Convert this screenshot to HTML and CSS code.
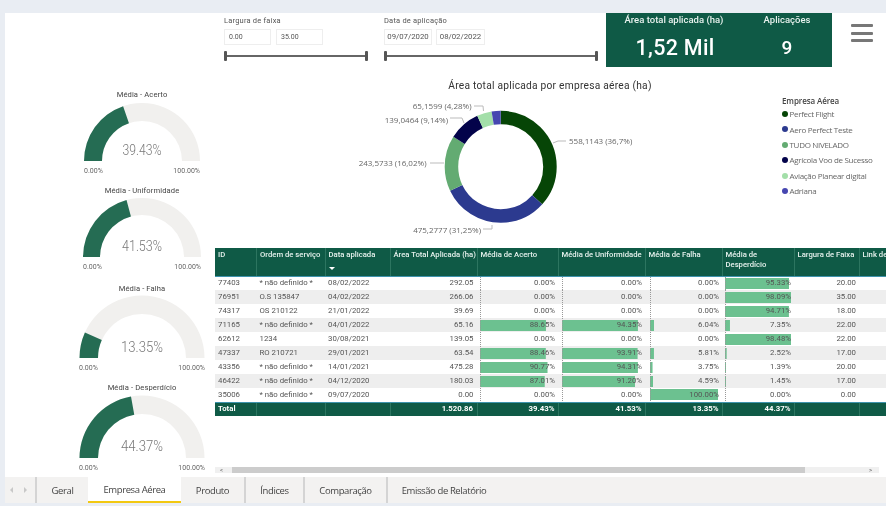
FILE: index.html
```html
<!DOCTYPE html>
<html lang="pt">
<head>
<meta charset="utf-8">
<title>Empresa Aérea</title>
<link rel="stylesheet" href="styles.css">
</head>
<body>
<div class="page">
  <div class="canvas">
    <aside class="gauges">
      <section class="gauge g1">
        <h3>Média - Acerto</h3>
        <svg width="130" height="60" viewBox="0 0 130 60">
          <path class="track" d="M7 60A58 58 0 0 1 123 60L105 60A40 40 0 0 0 25 60Z"/>
          <path class="fill" d="M7 60A58 58 0 0 1 46.1 5.2L51.96 22.2A40 40 0 0 0 25 60Z"/>
          <text x="65" y="54" textLength="39" lengthAdjust="spacingAndGlyphs">39.43%</text>
        </svg>
        <div class="range"><span>0.00%</span><span>100.00%</span></div>
      </section>
      <section class="gauge g2">
        <h3>Média - Uniformidade</h3>
        <svg width="130" height="60" viewBox="0 0 130 60">
          <path class="track" d="M6 60A59 59 0 0 1 124 60L107 60A42 42 0 0 0 23 60Z"/>
          <path class="fill" d="M6 60A59 59 0 0 1 49.5 3.1L53.95 19.5A42 42 0 0 0 23 60Z"/>
          <text x="65" y="54" textLength="40" lengthAdjust="spacingAndGlyphs">41.53%</text>
        </svg>
        <div class="range"><span>0.00%</span><span>100.00%</span></div>
      </section>
      <section class="gauge g3">
        <h3>Média - Falha</h3>
        <svg width="130" height="63" viewBox="0 0 130 63">
          <path class="track" d="M2.5 63A62.5 62.5 0 0 1 127.5 63L109 63A44 44 0 0 0 21 63Z"/>
          <path class="fill" d="M2.5 63A62.5 62.5 0 0 1 7.9 37.6L24.8 45.1A44 44 0 0 0 21 63Z"/>
          <text x="65" y="57" textLength="42" lengthAdjust="spacingAndGlyphs">13.35%</text>
        </svg>
        <div class="range"><span>0.00%</span><span>100.00%</span></div>
      </section>
      <section class="gauge g4">
        <h3>Média - Desperdício</h3>
        <svg width="130" height="64" viewBox="0 0 130 64">
          <path class="track" d="M2.5 64A62.5 62.5 0 0 1 127.5 64L109 64A44 44 0 0 0 21 64Z"/>
          <path class="fill" d="M2.5 64A62.5 62.5 0 0 1 54 2.5L57.26 20.7A44 44 0 0 0 21 64Z"/>
          <text x="65" y="57" textLength="42" lengthAdjust="spacingAndGlyphs">44.37%</text>
        </svg>
        <div class="range"><span>0.00%</span><span>100.00%</span></div>
      </section>
    </aside>

    <main class="main">
      <header class="topbar">
        <div class="slicer s-width">
          <div class="slicer-title">Largura de faixa</div>
          <div class="inputs"><span class="input small">0.00</span><span class="input small">35.00</span></div>
          <div class="slider"><i></i><i></i></div>
        </div>
        <div class="slicer s-date">
          <div class="slicer-title">Data de aplicação</div>
          <div class="inputs"><span class="input date">09/07/2020</span><span class="input date">08/02/2022</span></div>
          <div class="slider"><i></i><i></i></div>
        </div>
        <div class="kpi">
          <div class="kpi-item k-area"><div class="kpi-label">Área total aplicada (ha)</div><div class="kpi-value">1,52 Mil</div></div>
          <div class="kpi-item k-apps"><div class="kpi-label">Aplicações</div><div class="kpi-value">9</div></div>
        </div>
        <div class="burger"><i></i><i></i><i></i></div>
      </header>

      <section class="chart-row">
        <div class="donut">
          <h2>Área total aplicada por empresa aérea (ha)</h2>
          <svg width="567" height="150" viewBox="215 95 567 150">
            <g class="ring" transform="rotate(-90 500.7 166.7)">
              <circle r="49.25" cx="500.7" cy="166.7" pathLength="100" stroke="#064506" stroke-dasharray="36.7 63.3"/>
              <circle r="49.25" cx="500.7" cy="166.7" pathLength="100" stroke="#2c3a8f" stroke-dasharray="31.25 68.75" stroke-dashoffset="-36.7"/>
              <circle r="49.25" cx="500.7" cy="166.7" pathLength="100" stroke="#63ab72" stroke-dasharray="16.02 83.98" stroke-dashoffset="-67.95"/>
              <circle r="49.25" cx="500.7" cy="166.7" pathLength="100" stroke="#03034a" stroke-dasharray="9.14 90.86" stroke-dashoffset="-83.97"/>
              <circle r="49.25" cx="500.7" cy="166.7" pathLength="100" stroke="#a3dfa9" stroke-dasharray="4.28 95.72" stroke-dashoffset="-93.11"/>
              <circle r="49.25" cx="500.7" cy="166.7" pathLength="100" stroke="#4646b0" stroke-dasharray="2.61 97.39" stroke-dashoffset="-97.39"/>
            </g>
            <g class="leaders">
              <polyline points="553,143 558,141 566,141"/>
              <polyline points="483,229 492,229 492,225"/>
              <polyline points="430,163 444,163"/>
              <polyline points="450,118 462,118 464,123"/>
              <polyline points="474,106 483,106 483.5,111"/>
            </g>
            <g class="labels">
              <text x="569" y="144">558,1143 (36,7%)</text>
              <text x="481" y="233" class="end">475,2777 (31,25%)</text>
              <text x="426.5" y="166" class="end">243,5733 (16,02%)</text>
              <text x="448" y="123" class="end">139,0464 (9,14%)</text>
              <text x="471.5" y="109" class="end">65,1599 (4,28%)</text>
            </g>
          </svg>
        </div>
        <div class="legend">
          <div class="legend-title">Empresa Aérea</div>
          <div class="legend-item"><i class="c1"></i>Perfect Flight</div>
          <div class="legend-item"><i class="c2"></i>Aero Perfect Teste</div>
          <div class="legend-item"><i class="c3"></i>TUDO NIVELADO</div>
          <div class="legend-item"><i class="c4"></i>Agrícola Voo de Sucesso</div>
          <div class="legend-item"><i class="c5"></i>Aviação Planear digital</div>
          <div class="legend-item"><i class="c6"></i>Adriana</div>
        </div>
      </section>

      <section class="table-area">
        <table class="grid">
          <colgroup>
            <col class="w1"><col class="w2"><col class="w3"><col class="w4"><col class="w5"><col class="w6"><col class="w7"><col class="w8"><col class="w9"><col class="w10">
          </colgroup>
          <thead>
            <tr>
              <th>ID</th><th>Ordem de serviço</th><th>Data aplicada<span class="sort"></span></th><th>Área Total Aplicada (ha)</th><th>Média de Acerto</th><th>Média de Uniformidade</th><th>Média de Falha</th><th>Média de<br>Desperdício</th><th>Largura de Faixa</th><th>Link de</th>
            </tr>
          </thead>
          <tbody>
            <tr><td>77403</td><td>* não definido *</td><td>08/02/2022</td><td class="n a">292.05</td><td class="n b1" style="--v:0">0.00%</td><td class="n b2" style="--v:0">0.00%</td><td class="n b3" style="--v:0">0.00%</td><td class="n b4" style="--v:.9533">95.33%</td><td class="n l">20.00</td><td></td></tr>
            <tr><td>76951</td><td>O.S 135847</td><td>04/02/2022</td><td class="n a">266.06</td><td class="n b1" style="--v:0">0.00%</td><td class="n b2" style="--v:0">0.00%</td><td class="n b3" style="--v:0">0.00%</td><td class="n b4" style="--v:.9809">98.09%</td><td class="n l">35.00</td><td></td></tr>
            <tr><td>74317</td><td>OS 210122</td><td>21/01/2022</td><td class="n a">39.69</td><td class="n b1" style="--v:0">0.00%</td><td class="n b2" style="--v:0">0.00%</td><td class="n b3" style="--v:0">0.00%</td><td class="n b4" style="--v:.9471">94.71%</td><td class="n l">18.00</td><td></td></tr>
            <tr><td>71165</td><td>* não definido *</td><td>04/01/2022</td><td class="n a">65.16</td><td class="n b1" style="--v:.8865">88.65%</td><td class="n b2" style="--v:.9435">94.35%</td><td class="n b3" style="--v:.0604">6.04%</td><td class="n b4" style="--v:.0735">7.35%</td><td class="n l">22.00</td><td></td></tr>
            <tr><td>62612</td><td>1234</td><td>30/08/2021</td><td class="n a">139.05</td><td class="n b1" style="--v:0">0.00%</td><td class="n b2" style="--v:0">0.00%</td><td class="n b3" style="--v:0">0.00%</td><td class="n b4" style="--v:.9848">98.48%</td><td class="n l">22.00</td><td></td></tr>
            <tr><td>47337</td><td>RO 210721</td><td>29/01/2021</td><td class="n a">63.54</td><td class="n b1" style="--v:.8846">88.46%</td><td class="n b2" style="--v:.9391">93.91%</td><td class="n b3" style="--v:.0581">5.81%</td><td class="n b4" style="--v:.0252">2.52%</td><td class="n l">17.00</td><td></td></tr>
            <tr><td>43356</td><td>* não definido *</td><td>14/01/2021</td><td class="n a">475.28</td><td class="n b1" style="--v:.9077">90.77%</td><td class="n b2" style="--v:.9431">94.31%</td><td class="n b3" style="--v:.0375">3.75%</td><td class="n b4" style="--v:.0139">1.39%</td><td class="n l">20.00</td><td></td></tr>
            <tr><td>46422</td><td>* não definido *</td><td>04/12/2020</td><td class="n a">180.03</td><td class="n b1" style="--v:.8701">87.01%</td><td class="n b2" style="--v:.912">91.20%</td><td class="n b3" style="--v:.0459">4.59%</td><td class="n b4" style="--v:.0145">1.45%</td><td class="n l">17.00</td><td></td></tr>
            <tr><td>35006</td><td>* não definido *</td><td>09/07/2020</td><td class="n a">0.00</td><td class="n b1" style="--v:0">0.00%</td><td class="n b2" style="--v:0">0.00%</td><td class="n b3" style="--v:1">100.00%</td><td class="n b4" style="--v:0">0.00%</td><td class="n l">0.00</td><td></td></tr>
          </tbody>
          <tfoot>
            <tr><td>Total</td><td></td><td></td><td class="n a">1.520.86</td><td class="n">39.43%</td><td class="n">41.53%</td><td class="n">13.35%</td><td class="n">44.37%</td><td></td><td></td></tr>
          </tfoot>
        </table>
        <div class="scrollbar">
          <span class="arrow">&lt;</span>
          <span class="thumb"></span>
          <span class="arrow right">&gt;</span>
        </div>
      </section>
    </main>
  </div>

  <nav class="tabs">
    <div class="tab-nav"><span class="tri left"></span><span class="tri"></span></div>
    <div class="tab tab-geral">Geral</div>
    <div class="tab tab-empresa">Empresa Aérea</div>
    <div class="tab tab-produto">Produto</div>
    <div class="tab tab-indices">Índices</div>
    <div class="tab tab-comp">Comparação</div>
    <div class="tab tab-emissao">Emissão de Relatório</div>
  </nav>
</div>
</body>
</html>
```

FILE: styles.css
```css
* { box-sizing: border-box; }
html, body { margin: 0; padding: 0; }
body {
  width: 886px;
  height: 506px;
  overflow: hidden;
  background: #e9edf3;
  font-family: Roboto, "Liberation Sans", sans-serif;
}
.page {
  width: 886px;
  height: 506px;
  padding: 13px 0 3px 5px;
  display: flex;
  flex-direction: column;
  filter: blur(.4px);
}
.canvas { flex: 1; display: flex; background: #fff; min-height: 0; }

/* gauges */
.gauges { width: 210px; padding: 76px 0 0 72px; flex: none; }
.gauge { width: 130px; display: flex; flex-direction: column; }
.gauge h3 {
  margin: 0;
  height: 12px;
  line-height: 12px;
  font-size: 7.6px;
  font-weight: 400;
  letter-spacing: .1px;
  color: #444;
  text-align: center;
}
.gauge svg { display: block; }
.g1 { height: 96px; }
.g2 { height: 98px; }
.g3 { height: 99px; }
.track { fill: #f1f0ee; }
.fill { fill: #256c53; }
.gauge text {
  font-size: 15px;
  font-weight: 300;
  fill: #777;
  text-anchor: middle;
}
.range {
  display: flex;
  justify-content: space-between;
  font-size: 7px;
  color: #666;
  height: 12px;
  line-height: 12px;
  margin-top: 4px;
}
.g1 .range { padding: 0 7px; }
.g2 .range { padding: 0 6px; }
.g3 .range, .g4 .range { padding: 0 2px; }

/* main */
.main { width: 671px; flex: none; display: flex; flex-direction: column; }
.topbar { height: 54px; display: flex; padding-left: 9px; flex: none; }
.slicer { flex: none; padding-top: 3px; }
.s-width { width: 144px; }
.s-date { width: 214px; margin-left: 16px; }
.slicer-title {
  font-size: 7.5px;
  color: #555;
  letter-spacing: .2px;
  height: 10px;
  line-height: 10px;
  margin-bottom: 3px;
}
.inputs { display: flex; }
.input {
  height: 16px;
  line-height: 14px;
  border: 1px solid #eee;
  background: #fff;
  color: #555;
  display: block;
}
.input.small { width: 47px; font-size: 7px; padding-left: 4px; margin-right: 5px; }
.input.date { width: 48px; font-size: 7.8px; text-align: center; margin-right: 4px; }
.input.date + .input.date { width: 49px; }
.slider {
  position: relative;
  height: 10px;
  margin-top: 6px;
  display: flex;
  justify-content: space-between;
  align-items: center;
}
.slider::before {
  content: "";
  position: absolute;
  left: 1px;
  right: 1px;
  top: 4px;
  height: 2px;
  background: #666;
}
.slider i { width: 3px; height: 10px; background: #555; border-radius: 1px; position: relative; }

.kpi {
  width: 226px;
  margin-left: 8px;
  flex: none;
  background: #0f5a46;
  display: flex;
  color: #fff;
  text-align: center;
  padding-top: 1px;
}
.k-area { width: 136px; }
.k-apps { width: 90px; }
.kpi-label { font-size: 9.5px; font-weight: 500; height: 12px; line-height: 12px; color: #e8f2ee; }
.kpi-value { font-size: 21.5px; font-weight: 500; margin-top: 9px; line-height: 26px; letter-spacing: .3px; }
.k-area .kpi-value { padding-left: 2px; }
.k-apps .kpi-value { font-size: 19px; }
.burger { margin: 11px 0 0 19px; width: 22px; flex: none; }
.burger i { display: block; height: 3px; background: #777; margin-bottom: 4.5px; border-radius: 1px; }

/* donut */
.chart-row { height: 181px; display: flex; flex: none; }
.donut { width: 567px; padding-top: 13px; flex: none; }
.donut h2 {
  margin: 0;
  height: 12px;
  line-height: 12px;
  font-size: 10.2px;
  font-weight: 400;
  letter-spacing: .25px;
  text-align: center;
  color: #333;
  padding-left: 103px;
}
.donut svg { display: block; margin-top: 3px; }
.ring circle { fill: none; stroke-width: 13.5; }
.leaders polyline { fill: none; stroke: #bbb; stroke-width: 1; }
.labels text { font-family: "Open Sans", sans-serif; font-size: 8px; fill: #666; }
.labels .end { text-anchor: end; }
.legend { padding-top: 28px; width: 104px; flex: none; font-family: "Open Sans", sans-serif; }
.legend-title { font-size: 8px; font-weight: 600; color: #444; height: 11.3px; line-height: 12px; letter-spacing: -.1px; }
.legend-item {
  height: 15.4px;
  line-height: 15.4px;
  font-size: 8px;
  letter-spacing: -.3px;
  color: #666;
  white-space: nowrap;
  display: flex;
  align-items: center;
}
.legend-item i { width: 6px; height: 6px; border-radius: 50%; margin: 0 1.5px 0 0; flex: none; }
.c1 { background: #064506; }
.c2 { background: #2c3a8f; }
.c3 { background: #63ab72; }
.c4 { background: #03034a; }
.c5 { background: #a3dfa9; }
.c6 { background: #4646b0; }

/* table */
.table-area { flex: 1; display: flex; flex-direction: column; min-height: 0; overflow: hidden; }
.grid {
  table-layout: fixed;
  width: 686px;
  border-collapse: collapse;
  font-size: 7.8px;
  color: #555;
  flex: none;
}
.w1 { width: 41.5px; }
.w2 { width: 68.5px; }
.w3 { width: 65px; }
.w4 { width: 87px; }
.w5 { width: 81px; }
.w6 { width: 87px; }
.w7 { width: 77px; }
.w8 { width: 72px; }
.w9 { width: 65px; }
.w10 { width: 42px; }
.grid th {
  height: 28px;
  background: #0f5a46;
  color: #e6f1ed;
  font-weight: 500;
  font-size: 7.7px;
  text-align: left;
  vertical-align: top;
  padding: 2px 2px 0 3px;
  line-height: 10px;
  border-bottom: 1px solid #3d93ad;
  border-left: 1px solid #2c7560;
  white-space: nowrap;
  overflow: hidden;
}
.grid th:first-child { border-left: 0; }
.sort {
  display: block;
  width: 7px;
  height: 5px;
  margin-top: 6px;
  position: relative;
}
.sort::after {
  content: "";
  position: absolute;
  left: 0;
  top: 1px;
  border: 3.5px solid transparent;
  border-top: 3.5px solid #fff;
  border-bottom: 0;
}
.grid tbody td {
  height: 14px;
  line-height: 12px;
  padding: 0 3px;
  white-space: nowrap;
  overflow: hidden;
}
.grid tbody tr:nth-child(even) { background: #eee; }
.n { text-align: right; }
.grid td.a { padding-right: 3.5px; }
.grid td.l { padding-right: 3px; }
.b1, .b2, .b3, .b4 {
  background:
    repeating-linear-gradient(#999 0 1px, transparent 1px 2px) var(--o) 0 / 1px 100% no-repeat,
    linear-gradient(#6cc190, #6cc190) var(--o) center / calc(var(--f) * var(--v)) 11px no-repeat;
}
.b1 { --o: 3px; --f: 74.4px; }
.b2 { --o: 4px; --f: 80.5px; }
.b3 { --o: 5px; --f: 68px; }
.b4 { --o: 3px; --f: 67.5px; }
.grid tfoot td {
  height: 14px;
  background: #0f5a46;
  color: #fff;
  font-weight: 700;
  padding: 0 3px;
  line-height: 12px;
  border-top: 1px solid #3d93ad;
  border-left: 1px solid #2c7560;
}
.grid tfoot td:first-child { border-left: 0; }
.scrollbar {
  margin-top: auto;
  margin-bottom: 4px;
  height: 6px;
  width: 664px;
  background: #f0f0f0;
  display: flex;
  align-items: center;
  font-size: 6px;
  color: #555;
  line-height: 6px;
}
.arrow { width: 17px; padding-left: 5px; flex: none; }
.arrow.right { margin-left: auto; width: 14px; padding-left: 4px; }
.thumb { width: 573px; height: 6px; background: #ccc; flex: none; }

/* tabs */
.tabs {
  height: 26px;
  flex: none;
  background: #f3f2f1;
  display: flex;
  font-family: "Open Sans", sans-serif;
  font-size: 9.5px;
  letter-spacing: -.4px;
  color: #444;
}
.tab-nav { width: 30px; flex: none; display: flex; align-items: center; padding-left: 5px; gap: 11px; }
.tri { width: 0; height: 0; border: 3px solid transparent; border-left: 3px solid #c8c8c8; border-right: 0; }
.tri.left { border-left: 0; border-right: 3px solid #c8c8c8; }
.tab {
  display: flex;
  align-items: center;
  justify-content: center;
  flex: none;
  border-left: 2px solid #d4d4d4;
  height: 26px;
}
.tab-geral { width: 53px; }
.tab-empresa { width: 93px; background: #fff; border-left: 0; border-bottom: 2px solid #f2c811; }
.tab-produto { width: 63px; border-left: 0; }
.tab-indices { width: 59px; }
.tab-comp { width: 83px; }
.tab-emissao { width: 114px; }
```
